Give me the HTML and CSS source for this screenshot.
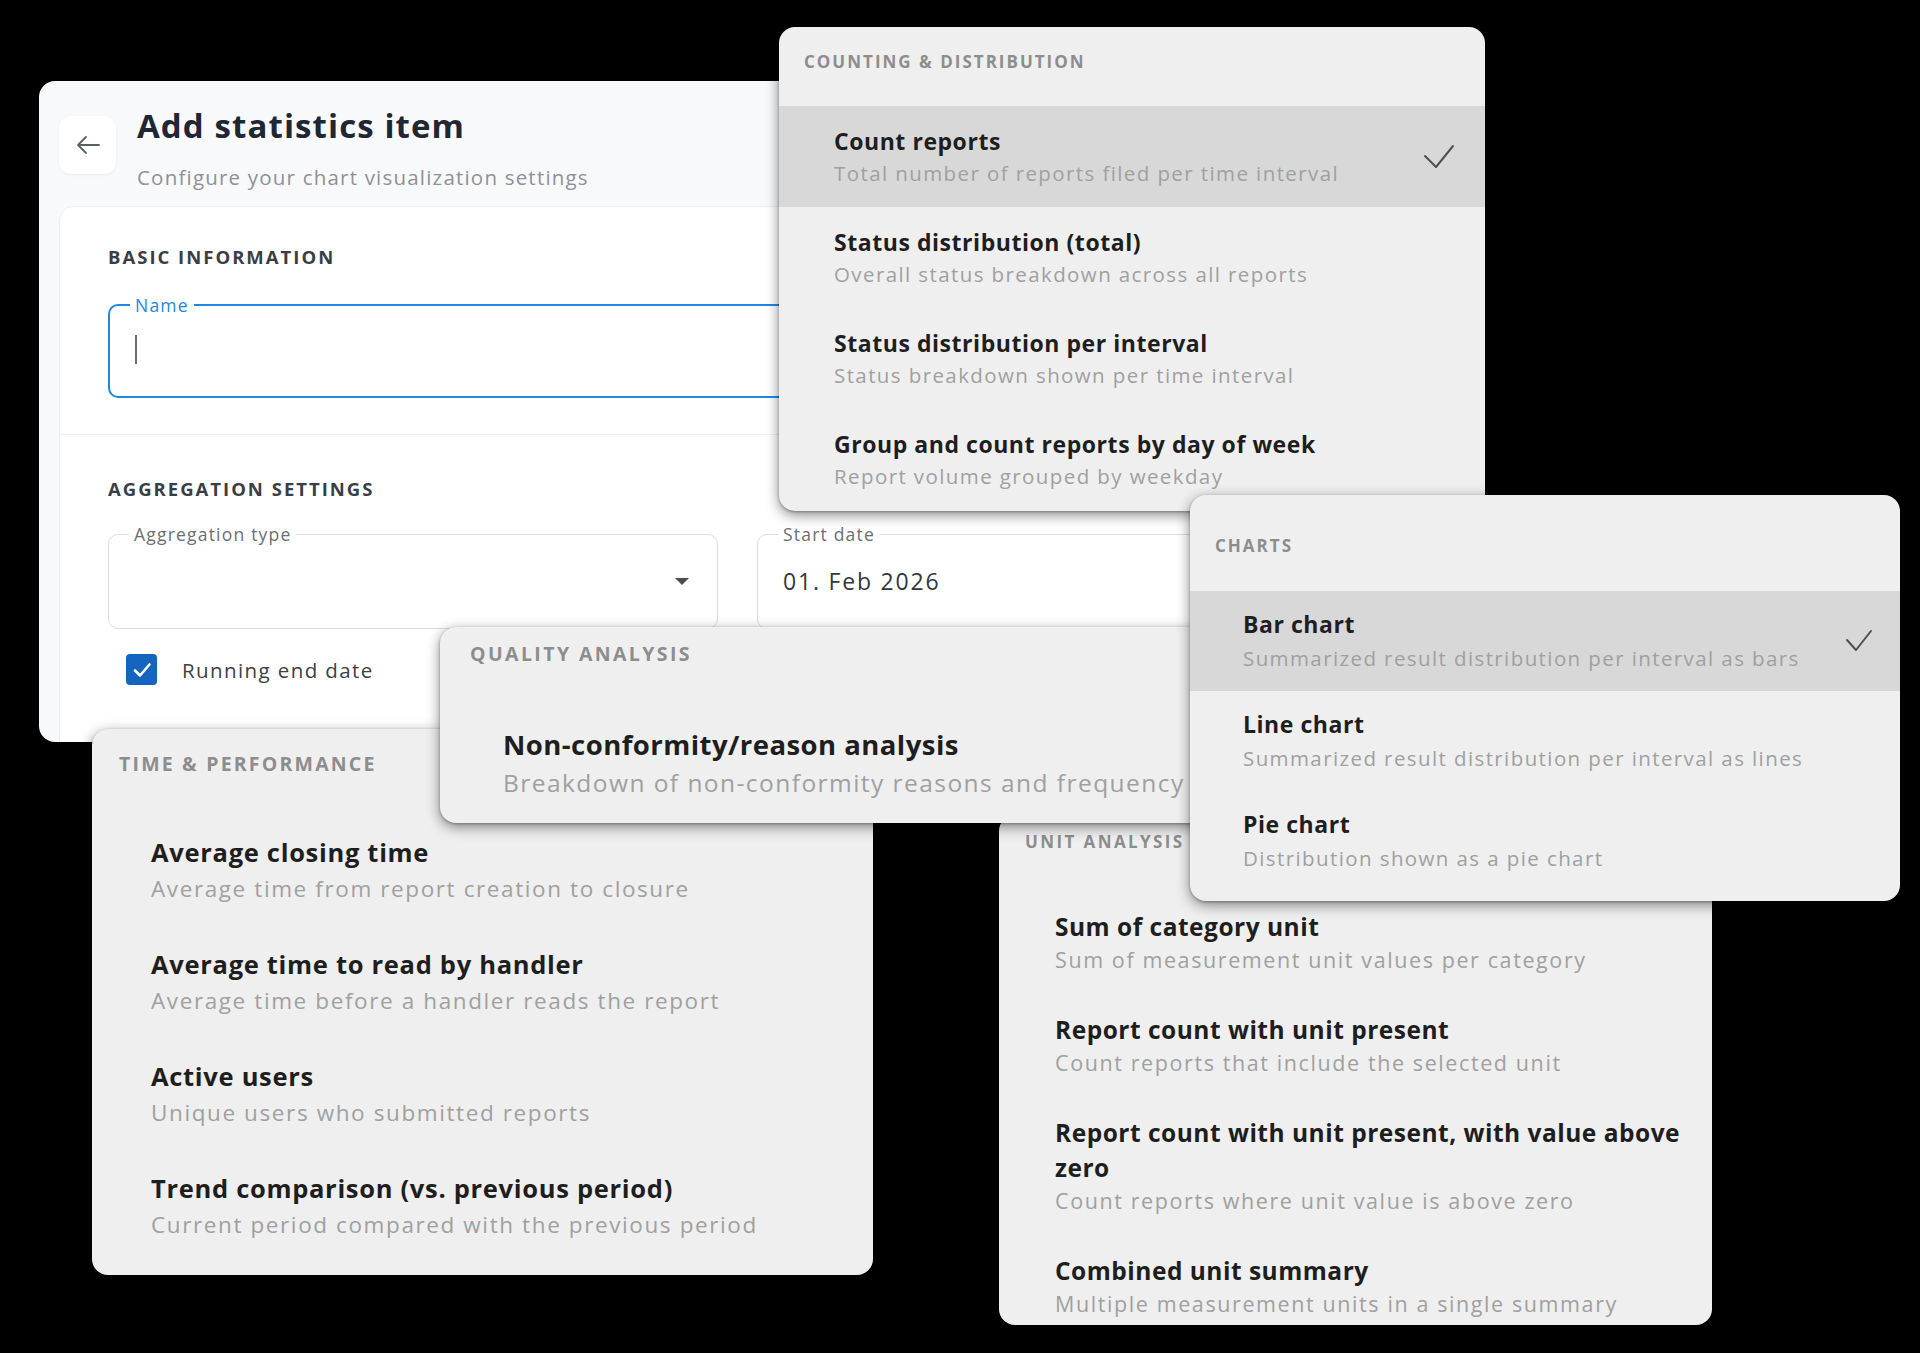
FILE: index.html
```html
<!DOCTYPE html>
<html lang="en">
<head>
<meta charset="utf-8">
<title>Add statistics item</title>
<link rel="stylesheet" href="styles.css">
</head>
<body>
<div class="canvas">

  <section class="editor">
    <header class="editor-head">
      <button class="back" type="button" aria-label="Back">
        <svg width="26" height="22" viewBox="0 0 26 22" fill="none" stroke="#5b5f66" stroke-width="1.8" stroke-linecap="round" stroke-linejoin="round"><path d="M24 11H3M11 3L3 11L11 19"/></svg>
      </button>
      <div class="head-text">
        <h1>Add statistics item</h1>
        <p>Configure your chart visualization settings</p>
      </div>
    </header>
    <div class="editor-body">
      <div class="section section-basic">
        <h2>Basic information</h2>
        <fieldset class="field field-active">
          <legend>Name</legend>
          <div class="field-content"><span class="caret"></span></div>
        </fieldset>
      </div>
      <div class="section section-agg">
        <h2>Aggregation settings</h2>
        <div class="field-grid">
          <fieldset class="field">
            <legend>Aggregation type</legend>
            <div class="field-content field-select"><span class="select-arrow"></span></div>
          </fieldset>
          <fieldset class="field">
            <legend>Start date</legend>
            <div class="field-content"><span class="value">01. Feb 2026</span></div>
          </fieldset>
        </div>
        <label class="check">
          <span class="box"><svg width="22" height="22" viewBox="0 0 22 22" fill="none" stroke="#fff" stroke-width="2.6" stroke-linecap="round" stroke-linejoin="round"><path d="M4 11.5L9 16.5L18.5 5.5"/></svg></span>
          <span class="check-label">Running end date</span>
        </label>
      </div>
    </div>
  </section>

  <div class="menu menu-counting">
    <div class="menu-head">Counting &amp; distribution</div>
    <div class="item selected">
      <div class="item-text"><div class="item-title">Count reports</div><div class="item-desc">Total number of reports filed per time interval</div></div>
      <svg class="tick" width="32" height="26" viewBox="0 0 32 26" fill="none" stroke="#4f4f4f" stroke-width="2" stroke-linecap="round" stroke-linejoin="round"><path d="M2 12L13 23L30 2"/></svg>
    </div>
    <div class="item">
      <div class="item-text"><div class="item-title">Status distribution (total)</div><div class="item-desc">Overall status breakdown across all reports</div></div>
    </div>
    <div class="item">
      <div class="item-text"><div class="item-title">Status distribution per interval</div><div class="item-desc">Status breakdown shown per time interval</div></div>
    </div>
    <div class="item">
      <div class="item-text"><div class="item-title">Group and count reports by day of week</div><div class="item-desc">Report volume grouped by weekday</div></div>
    </div>
  </div>

  <div class="menu menu-time">
    <div class="menu-head">Time &amp; performance</div>
    <div class="item">
      <div class="item-text"><div class="item-title">Average closing time</div><div class="item-desc">Average time from report creation to closure</div></div>
    </div>
    <div class="item">
      <div class="item-text"><div class="item-title">Average time to read by handler</div><div class="item-desc">Average time before a handler reads the report</div></div>
    </div>
    <div class="item">
      <div class="item-text"><div class="item-title">Active users</div><div class="item-desc">Unique users who submitted reports</div></div>
    </div>
    <div class="item">
      <div class="item-text"><div class="item-title">Trend comparison (vs. previous period)</div><div class="item-desc">Current period compared with the previous period</div></div>
    </div>
  </div>

  <div class="menu menu-unit">
    <div class="menu-head">Unit analysis</div>
    <div class="item">
      <div class="item-text"><div class="item-title">Sum of category unit</div><div class="item-desc">Sum of measurement unit values per category</div></div>
    </div>
    <div class="item">
      <div class="item-text"><div class="item-title">Report count with unit present</div><div class="item-desc">Count reports that include the selected unit</div></div>
    </div>
    <div class="item">
      <div class="item-text"><div class="item-title">Report count with unit present, with value above zero</div><div class="item-desc">Count reports where unit value is above zero</div></div>
    </div>
    <div class="item">
      <div class="item-text"><div class="item-title">Combined unit summary</div><div class="item-desc">Multiple measurement units in a single summary</div></div>
    </div>
  </div>

  <div class="menu menu-quality">
    <div class="menu-head">Quality analysis</div>
    <div class="item">
      <div class="item-text"><div class="item-title">Non-conformity/reason analysis</div><div class="item-desc">Breakdown of non-conformity reasons and frequency</div></div>
    </div>
  </div>

  <div class="menu menu-charts">
    <div class="menu-head">Charts</div>
    <div class="item selected">
      <div class="item-text"><div class="item-title">Bar chart</div><div class="item-desc">Summarized result distribution per interval as bars</div></div>
      <svg class="tick" width="28" height="24" viewBox="0 0 28 24" fill="none" stroke="#4f4f4f" stroke-width="2" stroke-linecap="round" stroke-linejoin="round"><path d="M2 11L11 21L26 2"/></svg>
    </div>
    <div class="item">
      <div class="item-text"><div class="item-title">Line chart</div><div class="item-desc">Summarized result distribution per interval as lines</div></div>
    </div>
    <div class="item">
      <div class="item-text"><div class="item-title">Pie chart</div><div class="item-desc">Distribution shown as a pie chart</div></div>
    </div>
  </div>

</div>
</body>
</html>
```

FILE: styles.css
```css
* { box-sizing: border-box; }

html, body {
  margin: 0;
  padding: 0;
  background: #000;
}

body {
  width: 1920px;
  height: 1353px;
  overflow: hidden;
  font-family: "Open Sans", "Noto Sans", sans-serif;
  color: #222;
}

.canvas {
  position: relative;
  width: 1920px;
  height: 1353px;
}

/* ---------- Editor card ---------- */
.editor {
  position: absolute;
  left: 39px;
  top: 81px;
  width: 1397px;
  height: 661px;
  background: #f8f9fb;
  border-radius: 16px;
  overflow: hidden;
  z-index: 1;
}

.editor-head {
  height: 125px;
  display: flex;
  align-items: flex-start;
  gap: 21px;
  padding: 24px 20px 0;
}

.back {
  margin-top: 11px;
  width: 57px;
  height: 58px;
  border: none;
  border-radius: 12px;
  background: #fff;
  box-shadow: 0 1px 3px rgba(0, 0, 0, 0.06);
  display: flex;
  align-items: center;
  justify-content: center;
  padding: 0;
}

.head-text h1 {
  margin: 0;
  font-size: 33px;
  line-height: 42px;
  font-weight: 700;
  color: #1f2733;
  letter-spacing: 1.1px;
}

.head-text p {
  margin: 16px 0 0;
  font-size: 20.5px;
  line-height: 28px;
  color: #8e9198;
  letter-spacing: 1.2px;
}

.editor-body {
  margin: 0 20px;
  height: 600px;
  background: #fff;
  border: 1px solid #eceef1;
  border-radius: 14px 14px 0 0;
  padding: 0 48px;
}

.section h2 {
  margin: 0;
  font-size: 18.5px;
  line-height: 22px;
  font-weight: 700;
  color: #3a3e44;
  text-transform: uppercase;
  letter-spacing: 2px;
}

.section-basic {
  padding: 39px 0 36px;
}

.section-agg {
  border-top: 1px solid #eef0f2;
  margin: 0 -48px;
  padding: 43px 48px 0;
}

.field {
  margin: 0;
  padding: 0 20px;
  border: 1px solid #dcdde0;
  border-radius: 10px;
  min-width: 0;
}

.field legend {
  padding: 0 5px;
  font-size: 17.5px;
  line-height: 20px;
  color: #6b6e73;
  letter-spacing: 1.2px;
}

.field-content {
  height: 84px;
  padding: 0 0 10px 5px;
  display: flex;
  align-items: center;
}

.section-basic .field {
  margin-top: 27px;
}

.field-active {
  border: 2px solid #1e88e5;
}

.field-active legend {
  color: #1e88e5;
  font-weight: 500;
}

.field-active .field-content {
  height: 81px;
  padding-bottom: 12px;
}

.caret {
  width: 2px;
  height: 29px;
  background: #6b6e73;
}

.field-grid {
  margin-top: 24px;
  display: grid;
  grid-template-columns: 1fr 1fr;
  gap: 39px;
}

.field-select {
  justify-content: flex-end;
  padding-right: 8px;
}

.select-arrow {
  width: 0;
  height: 0;
  border-left: 7px solid transparent;
  border-right: 7px solid transparent;
  border-top: 7px solid #4a4d52;
}

.value {
  font-size: 23px;
  color: #34373c;
  letter-spacing: 1.8px;
}

.check {
  margin-top: 25px;
  margin-left: 18px;
  display: flex;
  align-items: center;
  gap: 25px;
}

.box {
  width: 31px;
  height: 31px;
  border-radius: 4px;
  background: #1565c0;
  display: flex;
  align-items: center;
  justify-content: center;
}

.check-label {
  font-size: 20.5px;
  color: #3d4045;
  letter-spacing: 1.4px;
}

/* ---------- Menus ---------- */
.menu {
  position: absolute;
  background: #efefef;
  border-radius: 16px;
  overflow: hidden;
  box-shadow: 0 4px 14px rgba(0, 0, 0, 0.45), 0 1px 3px rgba(0, 0, 0, 0.3);
}

.menu-head {
  text-transform: uppercase;
  font-weight: 700;
  color: #8d8d8d;
  line-height: 24px;
}

.item {
  display: flex;
  align-items: center;
  justify-content: space-between;
}

.item.selected {
  background: #d8d8d8;
}

.item-title {
  font-weight: 700;
  color: #1e1e1e;
}

.item-desc {
  color: #a0a0a0;
}

/* Counting & distribution */
.menu-counting {
  left: 779px;
  top: 27px;
  width: 706px;
  height: 484px;
  z-index: 2;
}

.menu-counting .menu-head {
  height: 79px;
  padding: 23px 0 0 25px;
  font-size: 17px;
  letter-spacing: 2px;
}

.menu-counting .item {
  padding: 20px 30px 19px 55px;
}

.menu-counting .item-title {
  font-size: 23px;
  line-height: 30px;
  letter-spacing: 0.55px;
}

.menu-counting .item-desc {
  margin-top: 2px;
  font-size: 20.5px;
  line-height: 30px;
  letter-spacing: 1.4px;
}

/* Charts */
.menu-charts {
  left: 1190px;
  top: 495px;
  width: 710px;
  height: 406px;
  z-index: 6;
}

.menu-charts .menu-head {
  height: 96px;
  padding: 39px 0 0 25px;
  font-size: 17px;
  letter-spacing: 2px;
}

.menu-charts .item {
  padding: 18px 27px 18px 53px;
}

.menu-charts .item-title {
  font-size: 23px;
  line-height: 30px;
  letter-spacing: 0.55px;
}

.menu-charts .item-desc {
  margin-top: 4px;
  font-size: 20.5px;
  line-height: 30px;
  letter-spacing: 1.4px;
}

/* Quality analysis */
.menu-quality {
  left: 440px;
  top: 627px;
  width: 800px;
  height: 196px;
  z-index: 5;
}

.menu-quality .menu-head {
  height: 75px;
  padding: 15px 0 0 30px;
  font-size: 19.5px;
  letter-spacing: 2.4px;
}

.menu-quality .item {
  padding: 25px 20px 0 63px;
}

.menu-quality .item-title {
  font-size: 27.5px;
  line-height: 36px;
  letter-spacing: 0.45px;
}

.menu-quality .item-desc {
  margin-top: 4px;
  font-size: 24.5px;
  line-height: 32px;
  letter-spacing: 1.45px;
}

/* Time & performance */
.menu-time {
  left: 92px;
  top: 729px;
  width: 781px;
  height: 546px;
  z-index: 3;
}

.menu-time .menu-head {
  height: 85px;
  padding: 23px 0 0 27px;
  font-size: 19.5px;
  letter-spacing: 2.2px;
}

.menu-time .item {
  padding: 21px 20px 22px 59px;
}

.menu-time .item-title {
  font-size: 25.5px;
  line-height: 34px;
  letter-spacing: 0.7px;
}

.menu-time .item-desc {
  margin-top: 5px;
  font-size: 22.5px;
  line-height: 30px;
  letter-spacing: 1.6px;
}

/* Unit analysis */
.menu-unit {
  left: 999px;
  top: 815px;
  width: 713px;
  height: 510px;
  z-index: 4;
}

.menu-unit .menu-head {
  height: 75px;
  padding: 15px 0 0 26px;
  font-size: 17px;
  letter-spacing: 2.4px;
}

.menu-unit .item {
  padding: 19px 12px 17px 56px;
}

.menu-unit .item-title {
  font-size: 24.5px;
  line-height: 35px;
  letter-spacing: 0.5px;
}

.menu-unit .item-desc {
  font-size: 21.5px;
  line-height: 32px;
  letter-spacing: 1.6px;
}
```
